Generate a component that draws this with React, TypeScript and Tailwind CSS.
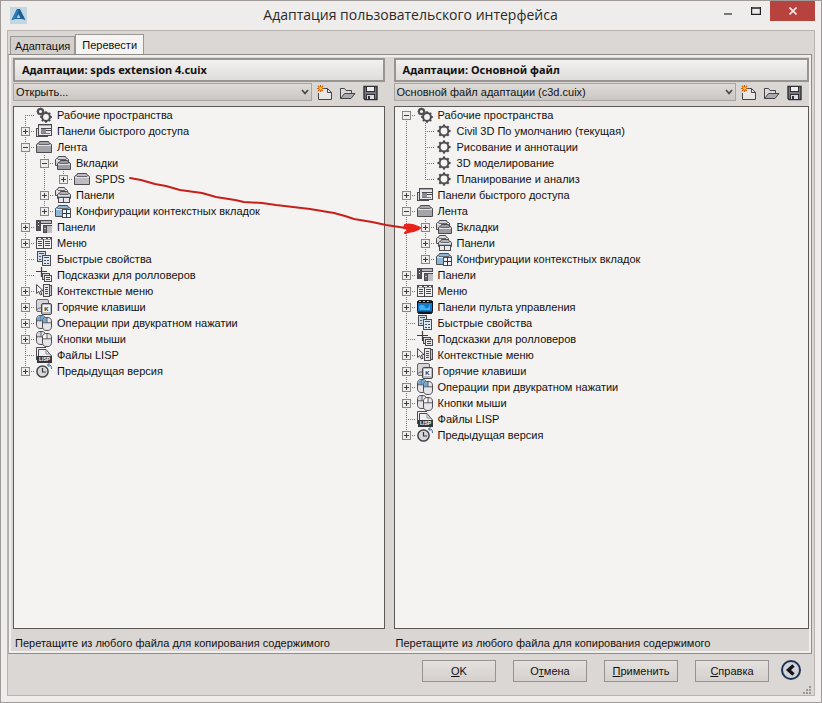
import { useState } from "react"
import type { ReactNode } from "react"

type IconName =
  | "gears"
  | "gear"
  | "quick"
  | "ribbon"
  | "ribbonTab"
  | "tabs"
  | "ribbonPanels"
  | "contextTabs"
  | "toolbars"
  | "menu"
  | "dashboard"
  | "props"
  | "rollover"
  | "contextMenu"
  | "hotkeys"
  | "dblclick"
  | "mouse"
  | "lisp"
  | "history"

interface TreeNode {
  label: string
  icon: IconName
  expandable?: boolean
  children?: TreeNode[]
}

const Gear = ({ x, y, r }: { x: number; y: number; r: number }) => (
  <g transform={`translate(${x} ${y})`}>
    <g stroke="#4c4c51" strokeWidth={r * 0.5}>
      {[0, 45, 90, 135].map((a) => (
        <line key={a} x1={-r * 1.5} x2={r * 1.5} y1="0" y2="0" transform={`rotate(${a})`} />
      ))}
    </g>
    <circle r={r} fill="#f4f3f1" stroke="#4c4c51" strokeWidth="2" />
  </g>
)

const Case = ({ x, y, w, h, fill }: { x: number; y: number; w: number; h: number; fill: string }) => (
  <g transform={`translate(${x} ${y})`}>
    <path
      d={`M0.5 ${h - 0.5}V3.5L1.5 2.5H2.5L3.5 0.5H${w - 3.5}L${w - 2.5} 2.5H${w - 1.5}L${w - 0.5} 3.5V${h - 0.5}Z`}
      fill={fill}
      stroke="#4c4c50"
    />
    <path d={`M1 4.5H${w - 1}`} stroke="#e4e4e8" />
    <path d={`M3 3.5H${w - 3}`} stroke="#66666b" />
  </g>
)

const Sheet = ({ x, y, w, h, fill = "#e9e9ec" }: { x: number; y: number; w: number; h: number; fill?: string }) => (
  <rect x={x + 0.5} y={y + 0.5} width={w - 1} height={h - 1} fill={fill} stroke="#4a4a50" />
)

const Mouse = ({ x, y, left }: { x: number; y: number; left: string }) => (
  <g transform={`translate(${x} ${y})`}>
    <path d="M0.5 5C0.5 1.5 2 0.5 5 0.5S9.5 1.5 9.5 5V9C9.5 12.5 8 13.5 5 13.5S0.5 12.5 0.5 9Z" fill="#e6e6ea" stroke="#4d4d53" />
    <path d="M1 5.5V5C1 2 2.5 1 4.8 1V5.5Z" fill={left} />
    <path d="M0.5 5.8H9.5M5 0.8V5.8" stroke="#4d4d53" strokeWidth="0.9" />
  </g>
)

const icons: Record<IconName, ReactNode> = {
  gears: (
    <>
      <Gear x={4.5} y={4.5} r={2.6} />
      <Gear x={10} y={10} r={3.9} />
    </>
  ),
  gear: <Gear x={8} y={8} r={4.4} />,
  quick: (
    <>
      <Sheet x={0} y={5} w={12} h={9} fill="#dcdce0" />
      <Sheet x={2} y={1} w={14} h={12} />
      <path d="M3 2.5H15" stroke="#a9a9b0" />
      <path d="M5 5.5H15M5 7.5H15" stroke="#4a4a50" />
      <rect x="5" y="6" width="5" height="5" fill="#8b8b92" />
      <path d="M5 10.5H14" stroke="#7a7a80" />
    </>
  ),
  ribbon: <Case x={0} y={2} w={16} h={12} fill="#a4a4a9" />,
  ribbonTab: <Case x={0} y={2} w={16} h={12} fill="#bcbcc1" />,
  tabs: (
    <>
      <Case x={0} y={1} w={14} h={10} fill="#d2d2d6" />
      <Case x={2} y={5} w={14} h={10} fill="#9c9ca2" />
    </>
  ),
  ribbonPanels: (
    <>
      <Case x={0} y={0} w={13} h={9} fill="#dddde0" />
      <Case x={2} y={4} w={14} h={8} fill="#b2b2b8" />
      <Sheet x={3} y={10} w={6} h={6} />
      <Sheet x={8} y={10} w={7} h={6} />
    </>
  ),
  contextTabs: (
    <>
      <Case x={0} y={2} w={16} h={12} fill="#8db7d8" />
      <Sheet x={7} y={6} w={9} h={9} fill="#f2f6fa" />
      <path d="M11.5 7V15M8 10.5H15" stroke="#25384c" />
    </>
  ),
  toolbars: (
    <>
      <Sheet x={0} y={1} w={5} h={11} fill="#55555a" />
      <Sheet x={4} y={1} w={12} h={4} fill="#b9b9be" />
      <Sheet x={7} y={6} w={4} h={8} fill="#6a6a70" />
      <path d="M10 6.5H16" stroke="#4a4a50" />
      <rect x="11" y="7" width="5" height="7" fill="#bdbdc2" />
      <path d="M2.5 3V4M2.5 6V7M9 9V10" stroke="#fff" />
    </>
  ),
  menu: (
    <>
      <Sheet x={0} y={2} w={16} h={12} fill="#f3f3f3" />
      <path d="M1 3.5H15" stroke="#4a4a50" strokeWidth="2" />
      <path d="M2 3.5H5M7 3.5H10M12 3.5H14" stroke="#fff" />
      <path d="M7.5 4V14" stroke="#3e3e44" />
      <path d="M2 6.5H6M2 8.5H6M2 10.5H6M9 6.5H14M9 8.5H14M9 10.5H14" stroke="#4a4a50" />
    </>
  ),
  dashboard: (
    <>
      <rect x="0.5" y="1.5" width="15" height="13" rx="2" fill="#1878c8" stroke="#10151c" />
      <path d="M0 3H16M1 13.5H15" stroke="#12171f" strokeWidth="2" />
      <path d="M2 2.5H4M6 2.5H8M10 2.5H12" stroke="#a9c8e0" />
      <path d="M2 8C3 5 7 5 8 8S12 9 13 5V11H3Z" fill="#41b0f0" />
    </>
  ),
  props: (
    <>
      <Sheet x={1} y={0} w={9} h={11} fill="#cfdcea" />
      <path d="M3 2.5H8M3 5.5H5M3 8.5H5" stroke="#3f5a7c" />
      <Sheet x={6} y={4} w={9} h={11} fill="#dfe7ef" />
      <path d="M8 6.5H13M8 9.5H10M11 9.5H13M8 12.5H10M11 12.5H13" stroke="#3f4f66" />
    </>
  ),
  rollover: (
    <>
      <path d="M5.5 0V10M0 4.5H11" stroke="#3e3e44" strokeWidth="1.2" />
      <Sheet x={6} y={6} w={8} h={7} fill="#d9d9dd" />
      <Sheet x={8} y={8} w={8} h={7} />
      <path d="M10 10.5H14M10 12.5H14" stroke="#4a4a50" />
    </>
  ),
  contextMenu: (
    <>
      <path d="M0.6 1.5V10.5L2.8 8.5L4.4 12L6 11.3L4.4 8L7 7.6Z" fill="#fff" stroke="#3e3e44" />
      <Sheet x={12} y={2} w={4} h={11} fill="#c5c5ca" />
      <Sheet x={7} y={1} w={7} h={13} />
      <path d="M9 4.5H12M9 6.5H12M9 8.5H12M9 10.5H12" stroke="#4a4a50" />
    </>
  ),
  hotkeys: (
    <>
      <rect x="0.5" y="0.5" width="12" height="12" rx="1.5" fill="#d5d5da" stroke="#65656b" />
      <path d="M1 10.5L3 9H6" stroke="#65656b" fill="none" />
      <rect x="5.5" y="4.5" width="10" height="11" rx="1.5" fill="#b9b9c0" stroke="#45454b" />
      <rect x="7" y="6" width="7" height="7" fill="#f2f2f4" />
      <text x="10.5" y="11.8" textAnchor="middle" fontSize="6" fontWeight="700" fill="#333" className="font-['Liberation_Sans',sans-serif]">
        K
      </text>
    </>
  ),
  dblclick: (
    <>
      <Mouse x={0} y={0} left="#69a9da" />
      <path d="M5.4 1C8 1 9 2 9 5.4H5.4Z" fill="#69a9da" />
      <Mouse x={6} y={2} left="#69a9da" />
    </>
  ),
  mouse: (
    <>
      <Mouse x={0} y={0} left="#d5d5da" />
      <Mouse x={6} y={2} left="#f8f8f8" />
    </>
  ),
  lisp: (
    <>
      <path d="M0.5 13V0.5H10" fill="none" stroke="#4a4a50" />
      <path d="M2.5 9V2.5H10L15.5 9" fill="#f0f0f2" stroke="#4a4a50" />
      <path d="M10 2.5V7H14" fill="none" stroke="#8a8a90" />
      <rect x="1" y="9" width="15" height="7" fill="#35353a" />
      <text x="8.5" y="14.4" textAnchor="middle" fontSize="5" fontWeight="700" fill="#fff" className="font-['Liberation_Sans',sans-serif]">
        LISP
      </text>
    </>
  ),
  history: (
    <>
      <circle cx="6.5" cy="8.5" r="5.6" fill="#d8d8dc" stroke="#45454b" strokeWidth="1.5" />
      <path d="M6.5 5V9H10" fill="none" stroke="#333338" strokeWidth="1.2" />
      <path d="M11.5 2H14Q15.5 2.5 15.5 6M13.5 0L11.5 2L13.5 4" fill="none" stroke="#3e6d9e" />
    </>
  ),
}

const tail: TreeNode[] = [
  { label: "Быстрые свойства", icon: "props" },
  { label: "Подсказки для ролловеров", icon: "rollover" },
  { label: "Контекстные меню", icon: "contextMenu", expandable: true },
  { label: "Горячие клавиши", icon: "hotkeys", expandable: true },
  { label: "Операции при двукратном нажатии", icon: "dblclick", expandable: true },
  { label: "Кнопки мыши", icon: "mouse", expandable: true },
  { label: "Файлы LISP", icon: "lisp" },
  { label: "Предыдущая версия", icon: "history", expandable: true },
]

const leftTree: TreeNode[] = [
  { label: "Рабочие пространства", icon: "gears" },
  { label: "Панели быстрого доступа", icon: "quick", expandable: true },
  {
    label: "Лента",
    icon: "ribbon",
    children: [
      { label: "Вкладки", icon: "tabs", children: [{ label: "SPDS", icon: "ribbonTab", expandable: true }] },
      { label: "Панели", icon: "ribbonPanels", expandable: true },
      { label: "Конфигурации контекстных вкладок", icon: "contextTabs", expandable: true },
    ],
  },
  { label: "Панели", icon: "toolbars", expandable: true },
  { label: "Меню", icon: "menu", expandable: true },
  ...tail,
]

const rightTree: TreeNode[] = [
  {
    label: "Рабочие пространства",
    icon: "gears",
    children: [
      { label: "Civil 3D По умолчанию (текущая)", icon: "gear" },
      { label: "Рисование и аннотации", icon: "gear" },
      { label: "3D моделирование", icon: "gear" },
      { label: "Планирование и анализ", icon: "gear" },
    ],
  },
  { label: "Панели быстрого доступа", icon: "quick", expandable: true },
  {
    label: "Лента",
    icon: "ribbon",
    children: [
      { label: "Вкладки", icon: "tabs", expandable: true },
      { label: "Панели", icon: "ribbonPanels", expandable: true },
      { label: "Конфигурации контекстных вкладок", icon: "contextTabs", expandable: true },
    ],
  },
  { label: "Панели", icon: "toolbars", expandable: true },
  { label: "Меню", icon: "menu", expandable: true },
  { label: "Панели пульта управления", icon: "dashboard", expandable: true },
  ...tail,
]

const Connector = ({ d, children }: { d: string; children?: ReactNode }) => (
  <svg width="19" height="16" className="block shrink-0" aria-hidden="true">
    <path d={d} stroke="#77736f" strokeDasharray="1 1" fill="none" />
    {children}
  </svg>
)

interface ItemProps {
  node: TreeNode
  guides: boolean[]
  first: boolean
  last: boolean
}

const TreeItem = ({ node, guides, first, last }: ItemProps) => {
  const [open, setOpen] = useState(Boolean(node.children))
  const hasToggle = Boolean(node.children || node.expandable)
  const isRoot = guides.length === 0
  const line = `M9.5 ${isRoot && first ? 8 : 0}V${last ? 8 : 16}M9 8.5H19`

  return (
    <li role="treeitem" aria-expanded={hasToggle ? open : undefined}>
      <div className="flex h-4 items-center">
        {guides.map((on, i) => (
          <Connector key={i} d={on ? "M9.5 0V16" : ""} />
        ))}
        {hasToggle ? (
          <button type="button" aria-label={node.label} onClick={() => setOpen(!open)} className="shrink-0">
            <Connector d={line}>
              <rect x="5.5" y="4.5" width="8" height="8" fill="#eeedeb" stroke="#8a8683" />
              <path d={open ? "M7 8.5H12" : "M7 8.5H12M9.5 6V11"} stroke="#3c3c4c" />
            </Connector>
          </button>
        ) : (
          <Connector d={line} />
        )}
        <svg width="16" height="16" viewBox="0 0 16 16" className="ml-px block shrink-0" aria-hidden="true">
          {icons[node.icon]}
        </svg>
        <span className="ml-[5px] whitespace-nowrap">{node.label}</span>
      </div>
      {open && node.children && (
        <ul role="group">
          {node.children.map((child, i) => (
            <TreeItem
              key={child.label}
              node={child}
              guides={[...guides, !last]}
              first={i === 0}
              last={i === node.children!.length - 1}
            />
          ))}
        </ul>
      )}
    </li>
  )
}

const NewIcon = () => (
  <svg width="17" height="17" viewBox="0 0 17 17" aria-hidden="true">
    <path d="M2.5 9V15.5H15.5V8.5L11.5 4.5H7" fill="#e9e7e5" stroke="#45454a" />
    <path d="M11.5 4.5V8.5H15.5" fill="none" stroke="#45454a" />
    <path d="M4.5 1V8M1 4.5H8M2 2L7 7M7 2L2 7" stroke="#c9640f" strokeWidth="1.2" />
    <circle cx="4.5" cy="4.5" r="1.4" fill="#ffc23a" />
  </svg>
)

const OpenIcon = () => (
  <svg width="17" height="17" viewBox="0 0 17 17" aria-hidden="true">
    <path d="M1.5 14.5V4.5H5.5L7 6.5H12.5V9" fill="#dddbd9" stroke="#45454a" />
    <path d="M1.5 14.5L5.5 9.5H16L12 14.5Z" fill="#a9a9ae" stroke="#45454a" />
  </svg>
)

const SaveIcon = () => (
  <svg width="17" height="17" viewBox="0 0 17 17" aria-hidden="true">
    <path d="M2 2.5H15V15.5H3L2 14.5Z" fill="#77777d" stroke="#303036" strokeWidth="1.4" />
    <rect x="4.5" y="2.5" width="8" height="5" fill="#eeeeee" stroke="#303036" />
    <rect x="4.5" y="10.5" width="8" height="5" fill="#dcdce0" stroke="#303036" />
    <rect x="6" y="12" width="2" height="3" fill="#303036" />
  </svg>
)

interface PaneProps {
  id: string
  title: string
  file: string
  nodes: TreeNode[]
}

const Pane = ({ id, title, file, nodes }: PaneProps) => (
  <section className="flex min-w-0 flex-col">
    <h2 className="flex h-6 items-center border-2 border-[#989492] bg-linear-to-b from-[#f3f2f0] to-[#dfdcda] px-[7px] font-['Noto_Sans','Open_Sans',sans-serif] text-[11px] font-bold">
      {title}
    </h2>
    <div className="mt-px flex items-center">
      <div className="relative min-w-0 flex-1">
        <select
          id={id}
          aria-label={title}
          className="block h-[18px] w-full appearance-none border border-[#aaa6a3] bg-linear-to-b from-[#dedbd8] to-[#cbc6c2] pl-0.5 text-[11px]"
        >
          <option>{file}</option>
        </select>
        <svg width="8" height="6" viewBox="0 0 8 6" className="pointer-events-none absolute top-1.5 right-[3px]" aria-hidden="true">
          <path d="M1 1L4 4.5L7 1" fill="none" stroke="#4a4644" strokeWidth="1.7" />
        </svg>
      </div>
      <div className="flex shrink-0 items-center gap-1.5 pr-1.5 pl-1">
        <button type="button" aria-label="Создать">
          <NewIcon />
        </button>
        <button type="button" aria-label="Открыть">
          <OpenIcon />
        </button>
        <button type="button" aria-label="Сохранить">
          <SaveIcon />
        </button>
      </div>
    </div>
    <div className="mt-[5px] flex-1 overflow-hidden border border-[#5e5855] bg-[#f4f3f1] pl-0.5">
      <ul role="tree" aria-label={title}>
        {nodes.map((node, i) => (
          <TreeItem key={node.label + node.icon} node={node} guides={[]} first={i === 0} last={i === nodes.length - 1} />
        ))}
      </ul>
    </div>
    <p className="flex h-[22px] items-end pl-0.5 whitespace-nowrap">
      Перетащите из любого файла для копирования содержимого
    </p>
  </section>
)

const DialogButton = ({ children }: { children: ReactNode }) => (
  <button
    type="button"
    className="h-[22px] w-[74px] border border-[#979290] bg-linear-to-b from-[#e3e0dd] to-[#d5d0cd] text-[11px]"
  >
    {children}
  </button>
)

const App = () => {
  return (
    <div className="flex min-h-screen flex-col border border-[#a09b98] bg-[#efedeb] px-1.5 pb-1.5 font-['Liberation_Sans',Arial,sans-serif] text-[11px] leading-4 text-[#111]">
      <header className="flex h-[29px] items-start">
        <svg width="17" height="17" viewBox="0 0 17 17" className="mt-1.5 ml-[3px] shrink-0" aria-hidden="true">
          <rect width="17" height="17" fill="#c5d6e3" />
          <path d="M7 2H10L15.5 13L12 12H5L1.5 13Z" fill="#1b5f95" />
          <path d="M8.5 7L10.5 11H6.5Z" fill="#a9c9e0" />
          <path d="M7 2L1.5 13L5 12L8.5 4Z" fill="#2b7fb9" />
        </svg>
        <h1 className="mt-0.5 flex-1 pl-20 text-center font-['Open_Sans',sans-serif] text-[14px] leading-6 text-[#2a2a2a]">
          Адаптация пользовательского интерфейса
        </h1>
        <div className="flex shrink-0">
          <button type="button" aria-label="Свернуть" className="flex h-5 w-7 items-center justify-center">
            <svg width="10" height="8" aria-hidden="true">
              <path d="M1 7H9" stroke="#777" strokeWidth="2" />
            </svg>
          </button>
          <button type="button" aria-label="Развернуть" className="flex h-5 w-7 items-center justify-center">
            <svg width="10" height="8" aria-hidden="true">
              <path d="M0.5 0V7.5H9.5V0M0 1H10" fill="none" stroke="#222" strokeWidth="1.4" />
            </svg>
          </button>
          <button type="button" aria-label="Закрыть" className="flex h-5 w-[45px] items-center justify-center bg-[#b8423d]">
            <svg width="8" height="8" viewBox="0 0 8 8" aria-hidden="true">
              <path d="M0.5 0.5L7.5 7.5M7.5 0.5L0.5 7.5" stroke="#f6e9e8" strokeWidth="1.6" />
            </svg>
          </button>
        </div>
      </header>

      <main className="flex flex-1 flex-col border border-[#b8b3af] bg-[#dbd7d4]">
        <div role="tablist" className="flex items-end pt-[3px] pl-0.5">
          <button
            type="button"
            role="tab"
            aria-selected="false"
            className="h-[18px] border border-b-0 border-[#9b9794] bg-[#d3cfcc] px-1"
          >
            Адаптация
          </button>
          <button
            type="button"
            role="tab"
            aria-selected="true"
            className="h-5 border border-b-0 border-[#9b9794] bg-[#f5f4f2] px-1.5"
          >
            Перевести
          </button>
        </div>

        <div className="mr-0.5 flex flex-1 flex-col border border-[#8f8b88] border-l-[#b0acaa] bg-[#f1efed] p-0.5">
          <div className="relative grid flex-1 grid-cols-[minmax(0,372fr)_minmax(0,416fr)] gap-[9px] bg-[#dad6d3] pt-px pl-0.5">
            <Pane id="source" title="Адаптации: spds extension 4.cuix" file="Открыть..." nodes={leftTree} />
            <Pane id="target" title="Адаптации: Основной файл" file="Основной файл адаптации (c3d.cuix)" nodes={rightTree} />
            {/* red pen mark: from the SPDS tab to the target tabs node */}
            <svg
              width="300"
              height="64"
              viewBox="0 0 300 64"
              className="pointer-events-none absolute top-[116px] left-[117px]"
              aria-hidden="true"
            >
              <path
                d="M2 5L13 7L27 11L38 13L52 17L74 20L88 24L107 27L116 29L134 30L148 32L182 36L206 40L217 43L226 46L244 49L258 52L278 55L290 55"
                fill="none"
                stroke="#c5201a"
                strokeWidth="2"
                strokeLinecap="round"
                strokeLinejoin="round"
              />
              <path
                d="M277 52C284 50 288 53 292 55C287 59 282 58 277 60L281 56L276 55Z"
                fill="#e8231b"
                stroke="#e8231b"
                strokeWidth="2"
                strokeLinejoin="round"
              />
            </svg>
          </div>
        </div>

        <footer className="flex h-[42px] items-start justify-end gap-[17px] pt-1.5 pr-3">
          <DialogButton>
            <u>O</u>K
          </DialogButton>
          <DialogButton>
            О<u>т</u>мена
          </DialogButton>
          <DialogButton>
            <u>П</u>рименить
          </DialogButton>
          <DialogButton>
            <u>С</u>правка
          </DialogButton>
          <button type="button" aria-label="Скрыть" className="-ml-1.5">
            <svg width="22" height="22" viewBox="0 0 22 22" aria-hidden="true">
              <circle cx="11" cy="10" r="9" fill="#d3d4da" stroke="#1e3354" strokeWidth="2" />
              <path d="M13.5 5.5L8.5 10L13.5 14.5" fill="none" stroke="#15151c" strokeWidth="3.4" />
            </svg>
          </button>
        </footer>
        <svg width="9" height="9" className="-mt-2.5 mr-0.5 self-end" aria-hidden="true">
          <path d="M6 1h2M3 4h2M6 4h2M0 7h2M3 7h2M6 7h2" stroke="#9c9895" strokeWidth="2" />
        </svg>
      </main>
    </div>
  )
}

export default App
